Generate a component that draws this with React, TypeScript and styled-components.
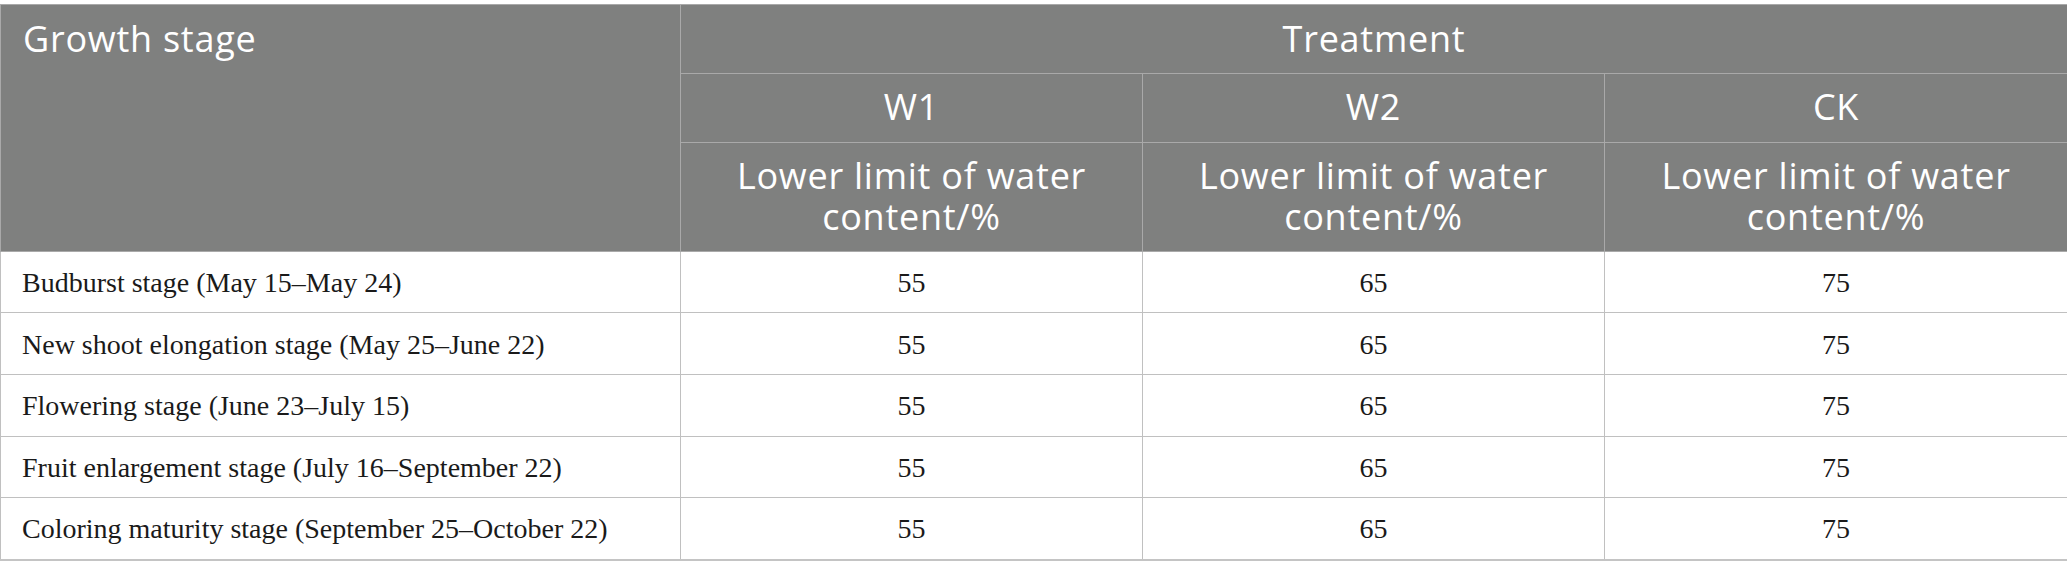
import React from "react";
import styled, { createGlobalStyle } from "styled-components";

const GlobalStyle = createGlobalStyle`
  html, body {
    margin: 0;
    padding: 0;
    background: #ffffff;
  }
`;

const Page = styled.div`
  width: 2067px;
  padding-top: 4px;
  box-sizing: border-box;
`;

const Table = styled.table`
  width: 2067px;
  border-collapse: collapse;
  table-layout: fixed;
  border-top: 1px solid #c4c4c4;
  border-bottom: 2px solid #c4c4c4;
`;

const HeadCell = styled.th<{ $align?: "left" | "center"; $valign?: "top" | "middle" }>`
  background: #7f807f;
  color: #ffffff;
  font-family: "Open Sans", "Noto Sans", sans-serif;
  font-weight: 400;
  font-size: 36px;
  letter-spacing: 0.75px;
  line-height: 40.5px;
  padding: 13.5px 22px 13.8px;
  text-align: ${(p) => p.$align ?? "center"};
  vertical-align: ${(p) => p.$valign ?? "middle"};
  border: 1px solid #a9a9a9;
`;

const Cell = styled.td<{ $align?: "left" | "center" }>`
  font-family: "Liberation Serif", "Times New Roman", serif;
  font-size: 28px;
  line-height: 31px;
  color: #1a1a1a;
  padding: 15.2px 21px 14.4px;
  text-align: ${(p) => p.$align ?? "center"};
  vertical-align: middle;
  border: 1px solid #c0c0c0;
`;

const rows = [
  ["Budburst stage (May 15–May 24)", "55", "65", "75"],
  ["New shoot elongation stage (May 25–June 22)", "55", "65", "75"],
  ["Flowering stage (June 23–July 15)", "55", "65", "75"],
  ["Fruit enlargement stage (July 16–September 22)", "55", "65", "75"],
  ["Coloring maturity stage (September 25–October 22)", "55", "65", "75"],
];

const treatments = ["W1", "W2", "CK"];

export default function App() {
  return (
    <Page>
      <GlobalStyle />
      <Table>
        <colgroup>
          <col style={{ width: 680 }} />
          <col style={{ width: 462 }} />
          <col style={{ width: 462 }} />
          <col style={{ width: 463 }} />
        </colgroup>
        <thead>
          <tr>
            <HeadCell rowSpan={3} $align="left" $valign="top">
              Growth stage
            </HeadCell>
            <HeadCell colSpan={3}>Treatment</HeadCell>
          </tr>
          <tr>
            {treatments.map((t) => (
              <HeadCell key={t}>{t}</HeadCell>
            ))}
          </tr>
          <tr>
            {treatments.map((t) => (
              <HeadCell key={t}>Lower limit of water content/%</HeadCell>
            ))}
          </tr>
        </thead>
        <tbody>
          {rows.map((r) => (
            <tr key={r[0]}>
              <Cell $align="left">{r[0]}</Cell>
              <Cell>{r[1]}</Cell>
              <Cell>{r[2]}</Cell>
              <Cell>{r[3]}</Cell>
            </tr>
          ))}
        </tbody>
      </Table>
    </Page>
  );
}
